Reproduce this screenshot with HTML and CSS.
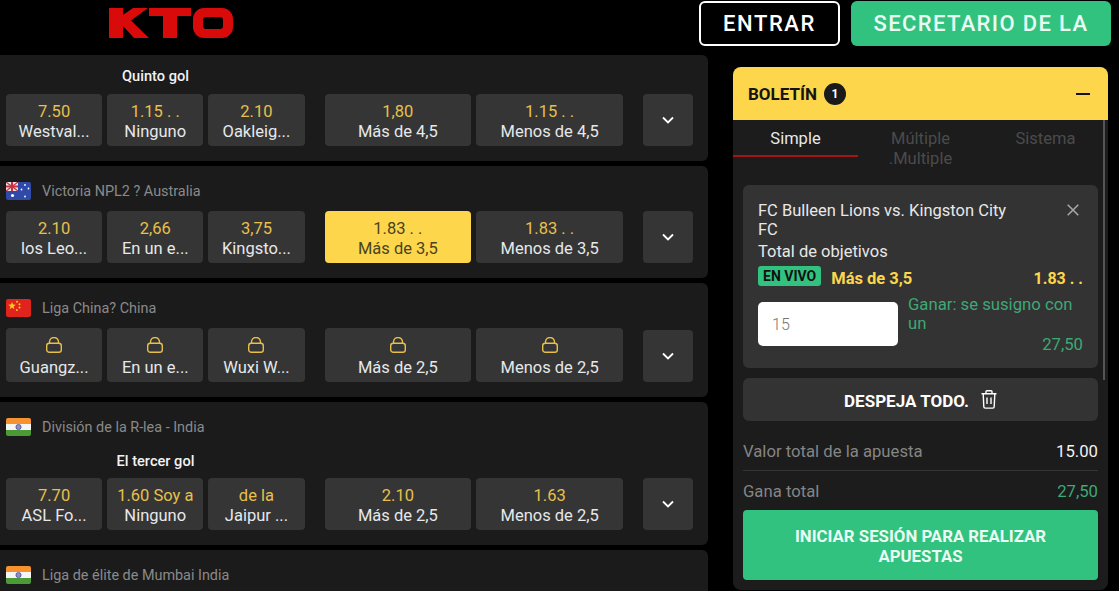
FILE: index.html
```html
<!DOCTYPE html>
<html lang="es">
<head>
    <meta charset="UTF-8">
    <meta name="viewport" content="width=device-width, initial-scale=1.0">
    <title>KTO - Apuestas</title>
    <link rel="stylesheet" href="styles.css">
</head>
<body>
    <svg class="sprites" width="0" height="0">
        <symbol id="lock" viewBox="0 0 16 16">
            <path d="M3.5 6.3V5a4.5 4.5 0 0 1 9 0v1.3" fill="none" stroke="currentColor" stroke-width="1.4"/>
            <rect x=".7" y="6.3" width="14.6" height="9" rx="2.6" fill="none" stroke="currentColor" stroke-width="1.4"/>
        </symbol>
        <symbol id="chevron" viewBox="0 0 12 8">
            <path d="M1 1.5l5 5 5-5" fill="none" stroke="currentColor" stroke-width="1.8"/>
        </symbol>
        <symbol id="flag-in" viewBox="0 0 25 18">
            <rect width="25" height="6" fill="#f7932e"/>
            <rect y="6" width="25" height="6" fill="#f5f5f5"/>
            <rect y="12" width="25" height="6" fill="#4c9a36"/>
            <circle cx="12.5" cy="9" r="2.6" fill="#8f8fc8" stroke="#3f3f95" stroke-width=".7"/>
        </symbol>
    </svg>

    <header class="topbar">
        <svg class="logo" viewBox="0 0 124 30" width="124" height="30">
            <path fill="#d90a0a" d="M0 0h14v7L24 0h15L22 12.5 40 30H25L14 18v12H0z"/>
            <path fill="#d90a0a" d="M40 0h42v8H68v22H54V8H40z"/>
            <path fill="#d90a0a" fill-rule="evenodd" d="M95 0h18a11 11 0 0 1 11 11v8a11 11 0 0 1-11 11H95a11 11 0 0 1-11-11v-8A11 11 0 0 1 95 0zm2 9a3 3 0 0 0-3 3v6a3 3 0 0 0 3 3h14a3 3 0 0 0 3-3v-6a3 3 0 0 0-3-3z"/>
        </svg>
        <div class="topbar-actions">
            <a class="btn-login">ENTRAR</a>
            <a class="btn-signup">SECRETARIO DE LA</a>
        </div>
    </header>

    <main class="layout">
        <section class="events">
            <article class="card card-plain">
                <div class="market-title">Quinto gol</div>
                <div class="market-row">
                    <div class="group">
                        <div class="odd"><span class="odd-value">7.50</span><span class="odd-label">Westval...</span></div>
                        <div class="odd"><span class="odd-value">1.15 . .</span><span class="odd-label">Ninguno</span></div>
                        <div class="odd"><span class="odd-value">2.10</span><span class="odd-label">Oakleig...</span></div>
                    </div>
                    <div class="group">
                        <div class="odd"><span class="odd-value">1,80</span><span class="odd-label">Más de 4,5</span></div>
                        <div class="odd"><span class="odd-value">1.15 . .</span><span class="odd-label">Menos de 4,5</span></div>
                    </div>
                    <div class="expand"><svg width="12" height="8"><use href="#chevron"/></svg></div>
                </div>
            </article>

            <article class="card">
                <div class="card-head">
                    <svg class="flag" viewBox="0 0 25 18">
                        <rect width="25" height="18" fill="#2f4aa8"/>
                        <rect width="12" height="9" fill="#e9e3ea"/>
                        <path d="M0 0l12 9M12 0L0 9" stroke="#c8323f" stroke-width="1.2"/>
                        <path d="M6 0v9M0 4.5h12" stroke="#c8323f" stroke-width="2"/>
                        <g fill="#fff">
                            <circle cx="6.5" cy="13.5" r="1.6"/>
                            <circle cx="19" cy="3" r=".9"/>
                            <circle cx="15.5" cy="7.5" r=".9"/>
                            <circle cx="22.5" cy="6.5" r=".9"/>
                            <circle cx="19" cy="14.5" r=".9"/>
                        </g>
                    </svg>
                    <span>Victoria NPL2 ? Australia</span>
                </div>
                <div class="market-row">
                    <div class="group">
                        <div class="odd"><span class="odd-value">2.10</span><span class="odd-label">los Leo...</span></div>
                        <div class="odd"><span class="odd-value">2,66</span><span class="odd-label">En un e...</span></div>
                        <div class="odd"><span class="odd-value">3,75</span><span class="odd-label">Kingsto...</span></div>
                    </div>
                    <div class="group">
                        <div class="odd odd-active"><span class="odd-value">1.83 . .</span><span class="odd-label">Más de 3,5</span></div>
                        <div class="odd"><span class="odd-value">1.83 . .</span><span class="odd-label">Menos de 3,5</span></div>
                    </div>
                    <div class="expand"><svg width="12" height="8"><use href="#chevron"/></svg></div>
                </div>
            </article>

            <article class="card">
                <div class="card-head">
                    <svg class="flag" viewBox="0 0 25 18">
                        <rect width="25" height="18" fill="#e0231c"/>
                        <g fill="#f7d21e">
                            <polygon points="6,3 7,5.6 9.8,5.7 7.6,7.4 8.4,10.2 6,8.6 3.6,10.2 4.4,7.4 2.2,5.7 5,5.6"/>
                            <circle cx="11" cy="2.8" r="1"/>
                            <circle cx="13.5" cy="5.2" r="1"/>
                            <circle cx="13.5" cy="8.4" r="1"/>
                            <circle cx="10.8" cy="11" r="1"/>
                        </g>
                    </svg>
                    <span>Liga China? China</span>
                </div>
                <div class="market-row">
                    <div class="group">
                        <div class="odd odd-locked"><svg class="lock" width="16" height="16"><use href="#lock"/></svg><span class="odd-label">Guangz...</span></div>
                        <div class="odd odd-locked"><svg class="lock" width="16" height="16"><use href="#lock"/></svg><span class="odd-label">En un e...</span></div>
                        <div class="odd odd-locked"><svg class="lock" width="16" height="16"><use href="#lock"/></svg><span class="odd-label">Wuxi W...</span></div>
                    </div>
                    <div class="group">
                        <div class="odd odd-locked"><svg class="lock" width="16" height="16"><use href="#lock"/></svg><span class="odd-label">Más de 2,5</span></div>
                        <div class="odd odd-locked"><svg class="lock" width="16" height="16"><use href="#lock"/></svg><span class="odd-label">Menos de 2,5</span></div>
                    </div>
                    <div class="expand"><svg width="12" height="8"><use href="#chevron"/></svg></div>
                </div>
            </article>

            <article class="card">
                <div class="card-head">
                    <svg class="flag"><use href="#flag-in"/></svg>
                    <span>División de la R-lea - India</span>
                </div>
                <div class="market-title">El tercer gol</div>
                <div class="market-row">
                    <div class="group">
                        <div class="odd"><span class="odd-value">7.70</span><span class="odd-label">ASL Fo...</span></div>
                        <div class="odd"><span class="odd-value">1.60 Soy a</span><span class="odd-label">Ninguno</span></div>
                        <div class="odd"><span class="odd-value">de la</span><span class="odd-label">Jaipur ...</span></div>
                    </div>
                    <div class="group">
                        <div class="odd"><span class="odd-value">2.10</span><span class="odd-label">Más de 2,5</span></div>
                        <div class="odd"><span class="odd-value">1.63</span><span class="odd-label">Menos de 2,5</span></div>
                    </div>
                    <div class="expand"><svg width="12" height="8"><use href="#chevron"/></svg></div>
                </div>
            </article>

            <article class="card">
                <div class="card-head">
                    <svg class="flag"><use href="#flag-in"/></svg>
                    <span>Liga de élite de Mumbai India</span>
                </div>
            </article>
        </section>

        <aside class="slip">
            <div class="slip-header">
                <span class="slip-title">BOLETÍN</span>
                <span class="slip-count">1</span>
                <span class="slip-minus"></span>
            </div>
            <div class="tabs">
                <div class="tab tab-active">Simple</div>
                <div class="tab">Múltiple .Multiple</div>
                <div class="tab">Sistema</div>
            </div>
            <div class="slip-body">
                <div class="bet">
                    <svg class="bet-close" viewBox="0 0 12 12" width="12" height="12">
                        <path d="M.7.7l10.6 10.6M11.3.7L.7 11.3" stroke="#a5a5a5" stroke-width="1.6"/>
                    </svg>
                    <div class="bet-match">FC Bulleen Lions vs. Kingston City FC</div>
                    <div class="bet-market">Total de objetivos</div>
                    <div class="bet-pick">
                        <span class="live">EN VIVO</span>
                        <span class="bet-choice">Más de 3,5</span>
                        <span class="bet-price">1.83 . .</span>
                    </div>
                    <div class="bet-stake">
                        <input class="stake-input" type="text" value="15">
                        <div class="stake-win">
                            <div>Ganar: se susigno con un</div>
                            <div class="stake-amount">27,50</div>
                        </div>
                    </div>
                </div>
                <div class="clear-all">
                    <span>DESPEJA TODO.</span>
                    <svg viewBox="0 0 16 19" width="16" height="19" fill="none" stroke="#fff" stroke-width="1.4">
                        <path d="M.5 3.7h15M5 3.5V1.6A.9.9 0 0 1 5.9.7h4.2a.9.9 0 0 1 .9.9v1.9"/>
                        <path d="M2.2 3.7l.6 13a1.4 1.4 0 0 0 1.4 1.4h7.6a1.4 1.4 0 0 0 1.4-1.4l.6-13"/>
                        <path d="M6 7.5v6.5M10 7.5v6.5"/>
                    </svg>
                </div>
                <div class="total-row total-first"><span>Valor total de la apuesta</span><span class="total-stake">15.00</span></div>
                <div class="total-row"><span>Gana total</span><span class="total-win">27,50</span></div>
                <div class="login-bet">INICIAR SESIÓN PARA REALIZAR APUESTAS</div>
            </div>
            <div class="slip-scroll"></div>
        </aside>
    </main>
</body>
</html>
```

FILE: styles.css
```css
html, body {
    margin: 0;
    height: 100%;
    overflow: hidden;
}
body {
    background-color: #000;
    color: #e8e8e8;
    font-family: 'Roboto', 'Liberation Sans', sans-serif;
    font-size: 16.5px;
    line-height: 20px;
}
.sprites {
    position: absolute;
}

/* top bar */
.topbar {
    height: 55px;
    display: flex;
    justify-content: space-between;
    box-sizing: border-box;
    padding: 1px 8px 0 109px;
}
.logo {
    margin-top: 7px;
}
.topbar-actions {
    display: flex;
    gap: 11px;
    height: 45px;
}
.btn-login, .btn-signup {
    display: flex;
    align-items: center;
    justify-content: center;
    box-sizing: border-box;
    border-radius: 6px;
    font-size: 22px;
    font-weight: 500;
    letter-spacing: 1.6px;
}
.btn-login {
    width: 141px;
    border: 2px solid #fff;
    color: #fff;
}
.btn-signup {
    width: 260px;
    background-color: #32c27f;
    color: #e9fbf2;
    letter-spacing: 1.35px;
}

.layout {
    display: flex;
    align-items: flex-start;
}

/* event list */
.events {
    width: 708px;
    display: flex;
    flex-direction: column;
    gap: 5px;
}
.card {
    background-color: #1b1b1b;
    border-radius: 0 6px 6px 0;
    padding-top: 16px;
}
.card-plain {
    padding-top: 12px;
}
.card-head {
    display: flex;
    align-items: center;
    height: 18px;
    margin-bottom: 11px;
    padding-left: 6px;
    font-size: 14.4px;
    color: #8a8a8a;
}
.card-head span {
    padding-top: 2px;
}
.flag {
    width: 25px;
    height: 18px;
    margin-right: 11px;
    border-radius: 2px;
}
.market-title {
    width: 311px;
    height: 18px;
    margin-bottom: 9px;
    line-height: 18px;
    text-align: center;
    font-size: 14.6px;
    font-weight: 500;
    color: #f2f2f2;
}
.card-head + .market-title {
    margin-top: 16px;
    margin-bottom: 8px;
}
.market-row {
    display: flex;
    align-items: flex-end;
    gap: 20px;
    padding: 0 15px 15px 6px;
}
.group {
    flex: 1;
    display: flex;
    gap: 5px;
}
.odd {
    flex: 1;
    min-width: 0;
    display: flex;
    flex-direction: column;
    align-items: center;
    box-sizing: border-box;
    height: 52px;
    padding-top: 8px;
    background-color: #353535;
    border-radius: 4px;
    white-space: nowrap;
}
.odd-value {
    color: #e7c04c;
}
.odd-label {
    color: #e6e8ea;
}
.odd-active {
    background-color: #fdd64b;
}
.odd-active .odd-value, .odd-active .odd-label {
    color: #4a4320;
}
.odd-locked {
    height: 54px;
    padding-top: 9px;
}
.lock {
    flex: none;
    margin-bottom: 5px;
    color: #e7c04c;
}
.expand {
    flex: none;
    display: flex;
    align-items: center;
    justify-content: center;
    width: 50px;
    height: 52px;
    background-color: #353535;
    border-radius: 4px;
    color: #fff;
}

/* bet slip */
.slip {
    position: relative;
    width: 375px;
    margin: 12px 0 0 25px;
    background-color: #1c1c1c;
    border-radius: 8px;
}
.slip-header {
    display: flex;
    align-items: center;
    height: 53px;
    padding: 0 18px 0 15px;
    background-color: #fdd64b;
    border-radius: 8px 8px 0 0;
    color: #141414;
}
.slip-title {
    font-size: 17px;
    font-weight: 700;
}
.slip-count {
    width: 22px;
    height: 22px;
    margin-left: 7px;
    border-radius: 50%;
    background-color: #1a1a1a;
    color: #fff;
    font-size: 12px;
    font-weight: 700;
    line-height: 22px;
    text-align: center;
}
.slip-minus {
    width: 14px;
    height: 2px;
    margin-left: auto;
    background-color: #141414;
}
.tabs {
    display: grid;
    grid-template-columns: repeat(3, 1fr);
    height: 37px;
}
.tab {
    box-sizing: border-box;
    height: 37px;
    padding: 9px 20px 0;
    text-align: center;
    color: #4b4b4b;
}
.tab-active {
    color: #e8e8e8;
    border-bottom: 2px solid #a81414;
}
.slip-body {
    padding: 28px 10px 10px;
}
.bet {
    position: relative;
    box-sizing: border-box;
    height: 183px;
    padding: 16px 15px 0;
    background-color: #333;
    border-radius: 6px;
    color: #e8e8e8;
}
.bet-close {
    position: absolute;
    top: 19px;
    right: 19px;
}
.bet-match {
    width: 262px;
    line-height: 19px;
}
.bet-market {
    margin-top: 3px;
}
.bet-pick {
    display: flex;
    align-items: flex-start;
    margin-top: 4px;
    font-weight: 700;
    color: #fdd64b;
}
.live {
    padding: 0 5px;
    background-color: #32c27f;
    border-radius: 3px;
    color: #111;
    font-size: 14px;
    line-height: 20px;
}
.bet-choice {
    margin: 3px 0 0 10px;
}
.bet-price {
    margin: 3px 0 0 auto;
    font-size: 16px;
}
.bet-stake {
    display: flex;
    gap: 10px;
    margin-top: 13px;
}
.stake-input {
    flex: none;
    box-sizing: border-box;
    width: 140px;
    height: 44px;
    padding: 0 14px;
    border: 0;
    border-radius: 5px;
    background-color: #fff;
    color: #777;
    font-family: inherit;
    font-size: 16px;
    font-weight: 300;
}
.stake-win {
    flex: 1;
    margin-top: -7px;
    color: #3ea876;
    font-size: 16.7px;
    line-height: 19px;
}
.stake-amount {
    margin-top: 2px;
    text-align: right;
}
.clear-all {
    display: flex;
    align-items: center;
    justify-content: center;
    gap: 12px;
    height: 43px;
    margin-top: 10px;
    background-color: #333;
    border-radius: 6px;
    color: #fff;
    font-size: 17px;
    font-weight: 700;
}
.clear-all span {
    padding-top: 2px;
}
.total-row {
    display: flex;
    justify-content: space-between;
    padding-top: 11px;
    height: 28px;
    color: #858585;
    font-size: 16.7px;
}
.total-first {
    margin-top: 10px;
    border-bottom: 1px solid #353535;
}
.total-stake {
    color: #f2f2f2;
}
.total-win {
    color: #3ea876;
}
.login-bet {
    display: flex;
    align-items: center;
    justify-content: center;
    box-sizing: border-box;
    height: 70px;
    padding: 2px 40px 0;
    background-color: #32c27f;
    border-radius: 4px;
    color: #e9fbf2;
    font-size: 16.8px;
    font-weight: 700;
    text-align: center;
}
.slip-scroll {
    position: absolute;
    top: 53px;
    right: 3px;
    width: 2px;
    height: 260px;
    background-color: #555;
}
```
